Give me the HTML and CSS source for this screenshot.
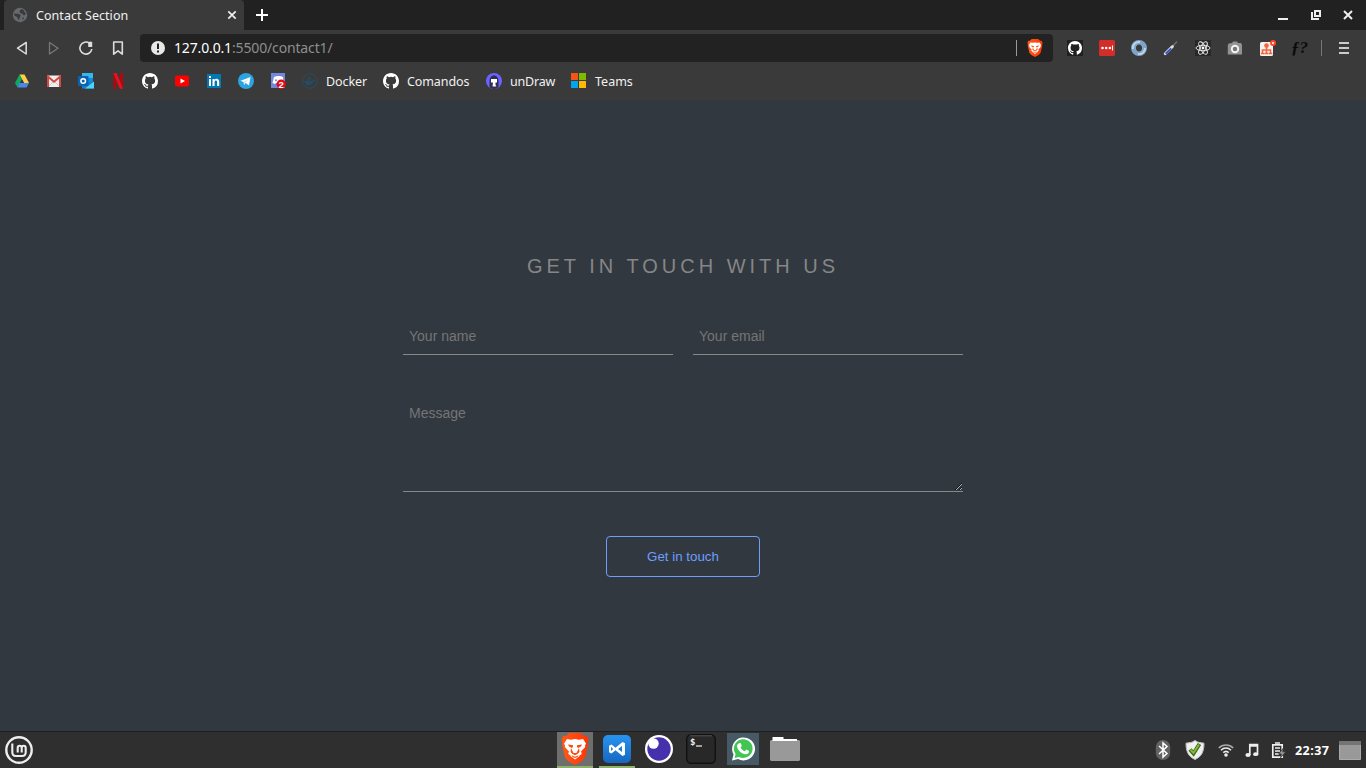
FILE: index.html
```html
<!DOCTYPE html>
<html lang="en">
<head>
<meta charset="utf-8">
<title>Contact Section</title>
<link rel="stylesheet" href="styles.css">
</head>
<body>
<svg class="defs" width="0" height="0" aria-hidden="true">
  <linearGradient id="orange" x2="1" y2="0"><stop stop-color="#ff5a16"/><stop offset="1" stop-color="#ff3505"/></linearGradient>
  <symbol id="github" viewBox="0 0 16 16"><path d="M8 0C3.58 0 0 3.58 0 8c0 3.54 2.29 6.53 5.47 7.59.4.07.55-.17.55-.38 0-.19-.01-.82-.01-1.49-2.01.37-2.53-.49-2.69-.94-.09-.23-.48-.94-.82-1.13-.28-.15-.68-.52-.01-.53.63-.01 1.08.58 1.23.82.72 1.21 1.87.87 2.33.66.07-.52.28-.87.51-1.07-1.78-.2-3.64-.89-3.64-3.95 0-.87.31-1.59.82-2.15-.08-.2-.36-1.02.08-2.12 0 0 .67-.21 2.2.82a7.6 7.6 0 0 1 4 0c1.53-1.04 2.2-.82 2.2-.82.44 1.1.16 1.92.08 2.12.51.56.82 1.27.82 2.15 0 3.07-1.87 3.75-3.65 3.95.29.25.54.73.54 1.48 0 1.07-.01 1.93-.01 2.2 0 .21.15.46.55.38A8.01 8.01 0 0 0 16 8c0-4.42-3.58-8-8-8z"/></symbol>
  <symbol id="brave" viewBox="0 0 28 32"><path fill="url(#orange)" d="M8 0h12l3 3h3l1.500 4-1 3 .5 1.500-3 13-3 3.500-7 4-7-4-3-3.500-3-13 .5-1.500-1-3L2 3h3z"/><path fill="#fff" d="M6 6l4 .8 4-.8 4 .8 4-.8 3 4.500-1 2 .2 1.500-4.200 4.500.8 2.500-2 1.200-.8 1.300-4 3-4-3-.8-1.300-2-1.200.8-2.500L3.800 14l.2-1.500-1-2z"/><path fill="#ff4a0c" d="M7 11.500l5 .8v1.400l-1 1.300-3-1.500zM21 11.500l-5 .8v1.400l1 1.300 3-1.500zM10 15l2.500 5h3l2.500-5 .5 4-2 2-2.500 1.200L11.500 21l-2-2zM10.500 22.200l3.500 1.600 3.500-1.600-1 1.800-2.500 1-2.500-1z"/></symbol>
</svg>

<header class="browser">
  <div class="tabs">
    <div class="tab">
      <svg width="16" height="16" viewBox="0 0 16 16"><circle cx="8" cy="8" r="7.200" fill="#66696d"/><path d="M2 7c2-1 3 0 5 0 2 1 2 2 1 3l-1 3c-2-1-1-3-3-3.500C3 9 2 8 2 7zM8 3c2-1 3-1 4 1l2 3-2 1.500c-1 0-1-2-2.500-2S7 5 8 3zM10 11l2-1-1 3z" fill="#3a3a3a"/></svg>
      <span class="tab-title">Contact Section</span>
      <svg width="10" height="10" viewBox="0 0 10 10"><path d="M1.300 1.300l7.400 7.400m0-7.400L1.300 8.700" stroke="#eee" stroke-width="1.700"/></svg>
    </div>
    <svg class="new-tab" width="12" height="12" viewBox="0 0 12 12"><path d="M6 0v12M0 6h12" stroke="#fff" stroke-width="2"/></svg>
    <div class="window-buttons">
      <svg width="10" height="12" viewBox="0 0 10 12"><path d="M0 10h10" stroke="#eee" stroke-width="2"/></svg>
      <svg width="10" height="12" viewBox="0 0 10 12"><path d="M1 3v7h7M4 2h5v5H4z" fill="none" stroke="#eee" stroke-width="2"/></svg>
      <svg width="10" height="12" viewBox="0 0 10 12"><path d="M1 2l8 8m0-8l-8 8" stroke="#eee" stroke-width="2"/></svg>
    </div>
  </div>

  <div class="toolbar">
    <div class="nav">
      <svg viewBox="0 0 16 16" width="16" height="16"><path d="M12.200 2.500v11.500L3.500 8.200z" fill="none" stroke="#ddd" stroke-width="1.500" stroke-linejoin="round"/></svg>
      <svg viewBox="0 0 16 16" width="16" height="16"><path d="M3.500 2.500v11.500L12 8.200z" fill="none" stroke="#777" stroke-width="1.300" stroke-linejoin="round"/></svg>
      <svg viewBox="0 0 16 16" width="16" height="16"><path d="M13.800 9A6 6 0 1 1 11.500 3.300" fill="none" stroke="#ddd" stroke-width="1.600"/><path d="M10.200 2l3-.5 1 1v4.500h-4z" fill="#ddd"/></svg>
      <svg viewBox="0 0 16 16" width="16" height="16"><path d="M3.700 2h8.600v12.200L8 10.800l-4.300 3.400z" fill="none" stroke="#ddd" stroke-width="1.600" stroke-linejoin="round"/></svg>
    </div>
    <div class="address">
      <svg width="14" height="14" viewBox="0 0 14 14"><circle cx="7" cy="7" r="7" fill="#e8e8e8"/><path d="M7 2.500v5.500M7 9.500v2" stroke="#222" stroke-width="2"/></svg>
      <span class="url"><b>127.0.0.1</b>:5500/contact1/</span>
      <i class="divider"></i>
      <svg width="16" height="18"><use href="#brave"/></svg>
    </div>
    <div class="extensions">
      <svg width="16" height="16" viewBox="0 0 16 16"><path fill="#211f1f" d="M0 0h16v16H0z"/><use href="#github" x="1" y="1" width="14" height="14" fill="#fff"/></svg>
      <svg width="16" height="16" viewBox="0 0 16 16"><rect width="16" height="16" rx="1.500" fill="#d32d27"/><circle cx="3.500" cy="8" r="1.300" fill="#fff"/><circle cx="7.200" cy="8" r="1.300" fill="#fff"/><circle cx="10.900" cy="8" r="1.300" fill="#fff"/><path d="M13.500 5.500v5" stroke="#fff"/></svg>
      <svg width="16" height="16" viewBox="0 0 16 16"><circle cx="8" cy="8" r="5.500" fill="none" stroke="#7fa4c9" stroke-width="5"/><path d="M2 9A6 6 0 0 1 9 2M14 8a6 6 0 0 1-7 6" fill="none" stroke="#bed3e8" stroke-width="2"/><ellipse cx="8" cy="8" rx="2.500" ry="3.500" fill="#3a3a3a"/></svg>
      <svg width="16" height="16" viewBox="0 0 16 16"><path d="M9 7l5-5.500" stroke="#6a6a6a" stroke-width="1.700"/><path d="M2.200 13.800l7.300-7.300" stroke="#ddd" stroke-width="2.800" stroke-linecap="round"/><path d="M2.700 13.800L8.200 8.400" stroke="#3656c9" stroke-width="2"/></svg>
      <svg width="16" height="16" viewBox="0 0 16 16"><path fill="#282828" d="M0 0h16v16H0z"/><g fill="none" stroke="#f2f2f2" stroke-width=".9"><ellipse cx="8" cy="8" rx="7" ry="2.700"/><ellipse cx="8" cy="8" rx="7" ry="2.700" transform="rotate(60 8 8)"/><ellipse cx="8" cy="8" rx="7" ry="2.700" transform="rotate(120 8 8)"/></g><circle cx="8" cy="8" r="1.400" fill="#fff"/></svg>
      <svg width="16" height="16" viewBox="0 0 16 16"><path d="M5 3l1-1.500h4L11 3h3l1 2v9.500H.8V5l1-1.500z" fill="#929292"/><circle cx="8" cy="9" r="3.200" fill="#777" stroke="#f4f4f4" stroke-width="1.900"/></svg>
      <svg width="17" height="16" viewBox="0 0 17 16"><rect x="1" y="2" width="13" height="14" rx="1.500" fill="#f5f1ef"/><circle cx="7.500" cy="5.500" r="2.300" fill="#f2653f"/><path d="M7.500 7v7M3.500 13v-3h8v3M1.800 13.500h3.600M5.700 13.500h3.600M9.700 13.500h3.600" fill="none" stroke="#f2653f" stroke-width="1.600"/><circle cx="14" cy="3" r="3" fill="#ff4827"/><circle cx="14" cy="3" r="1" fill="#fff"/></svg>
      <span class="font-query">ƒ?</span>
      <i class="divider"></i>
      <svg class="menu" width="10" height="12" viewBox="0 0 10 12"><path d="M0 1h10M0 6h10M0 11h10" stroke="#ccc" stroke-width="1.800"/></svg>
    </div>
  </div>

  <nav class="bookmarks">
    <a><svg width="16" height="16" viewBox="0 0 16 16"><path d="M5.500 1.500h5L15 10h-5z" fill="#ffcf40"/><path d="M5.500 1.500L8 6.300 3.500 14.500 1 10z" fill="#11a861"/><path d="M5.500 10H15l-2.500 4.500h-9z" fill="#4787f4"/><path d="M8 6.300l2 3.700H6z" fill="#3a3a3a"/></svg></a>
    <a><svg width="16" height="16" viewBox="0 0 16 16"><path d="M1 2.500h14V14H1z" fill="#eee"/><path d="M3 13l5-5 5 5" stroke="#ccc" fill="none"/><path d="M2 14V3.700l6 5 6-5V14" fill="none" stroke="#d54a3f" stroke-width="2"/></svg></a>
    <a><svg width="16" height="16" viewBox="0 0 16 16"><path d="M4 0h11v11H4z" fill="#35b8f1"/><path d="M10 5h5v5h-5z" fill="#1688d9"/><path d="M4 9h12v6.500H4z" fill="#1680cb"/><path d="M16 8.500v7H7z" fill="#4fd3fa"/><rect y="3" width="10.500" height="10" rx=".8" fill="#0864b1"/><circle cx="5.200" cy="8" r="2.300" fill="none" stroke="#fff" stroke-width="1.500"/></svg></a>
    <a><svg width="16" height="16" viewBox="0 0 16 16"><path d="M3.500 0h3v15.500l-3 .5zM10 0h3v16l-3-.5z" fill="#b20710"/><path d="M3.500 0h3L13 16l-3.200-.5z" fill="#f0101a"/></svg></a>
    <a><svg width="16" height="16" fill="#fff"><use href="#github"/></svg></a>
    <a><svg width="16" height="16" viewBox="0 0 16 16"><rect x="1" y="2.500" width="14" height="11" rx="2" fill="#f00"/><path d="M6.500 5.500v5L11 8z" fill="#fff"/></svg></a>
    <a><svg width="16" height="16" viewBox="0 0 16 16"><path fill="#0377b5" d="M1 1h14v14H1z"/><path d="M3 6h2v7H3zM3 3h2v2H3zM6.500 6h2v1c1-1.800 4.700-1.600 4.700 1.700V13h-2.100V9c0-2-2.500-2-2.500 0v4H6.500z" fill="#fff"/></svg></a>
    <a><svg width="16" height="16" viewBox="0 0 16 16"><circle cx="8" cy="8" r="8" fill="#2ba4df"/><path d="M2.500 7.700L12.500 4 11 12.500 7.700 10 6 12l-.5-3z" fill="#fff"/><path d="M6 9l5-3.500L7.500 9.300 6.500 12z" fill="#bfdded"/></svg></a>
    <a><svg width="16" height="16" viewBox="0 0 16 16"><path fill="#7289da" d="M1 0h14v15H1z"/><path d="M4 4l3-1h3l3 1 .5 6-2.500 1-1-1H6l-1 1-2.500-1z" fill="#fff"/><circle cx="6" cy="7.300" r="1" fill="#7289da"/><circle cx="11.200" cy="11.200" r="4.700" fill="#e50914"/><text x="8.600" y="14.600" font-family="Liberation Sans" font-size="9.500" font-weight="700" fill="#fff">2</text></svg></a>
    <a class="docker"><svg width="16" height="16" viewBox="0 0 16 16"><circle cx="8" cy="8" r="7.300" fill="none" stroke="#294c60"/><path d="M2.500 8h8l1-2 1 1.500h1.500c-1 1.500-2 1.500-3 1.500-2 5-8 4-8.500-1zM4 6.500h5v1H4zM6 4.500h3v1.500H6z" fill="#234c65"/></svg><span>Docker</span></a>
    <a class="comandos"><svg width="16" height="16" fill="#fff"><use href="#github"/></svg><span>Comandos</span></a>
    <a class="undraw"><svg width="16" height="16" viewBox="0 0 16 16"><circle cx="8" cy="8" r="8" fill="#6c63ff"/><path d="M3.500 14V8c0-7.500 9-7.500 9 0v6c-2 2.500-7 2.500-9 0z" fill="#2f2e50"/><path d="M5 6h6v3.500H9.500V12l1 1.500h-4L7 9.500H5z" fill="#fff"/></svg><span>unDraw</span></a>
    <a class="teams"><svg width="16" height="16" viewBox="0 0 16 16"><path fill="#f65314" d="M0 0h7v7H0z"/><path fill="#7fba00" d="M8 0h7v7H8z"/><path fill="#00a4ef" d="M0 8h7v7H0z"/><path fill="#ffb900" d="M8 8h7v7H8z"/></svg><span>Teams</span></a>
  </nav>
</header>

<main class="page">
  <form class="contact">
    <h1>GET IN TOUCH WITH US</h1>
    <div class="fields">
      <input type="text" placeholder="Your name">
      <input type="email" placeholder="Your email">
    </div>
    <textarea placeholder="Message"></textarea>
    <button type="button">Get in touch</button>
  </form>
</main>

<footer class="taskbar">
  <svg class="mint" width="28" height="28" viewBox="0 0 28 28"><g fill="none" stroke="#eee"><circle cx="14" cy="14" r="12.700" stroke-width="2.400"/><path d="M7.300 7.500v8.800c0 2.500 1 3.700 3.500 3.700h6.400c2.500 0 3.500-1.200 3.500-3.700V12c0-3-4-3-4 0v4.500M16.700 12c0-3-4-3-4 0v4.500" stroke-width="2.100"/></g></svg>
  <div class="apps">
    <div class="app focused running"><svg width="28" height="32"><use href="#brave"/></svg></div>
    <div class="app running"><svg width="28" height="28" viewBox="0 0 28 28"><defs><linearGradient id="vs" x2="0" y2="1"><stop stop-color="#2794ef"/><stop offset="1" stop-color="#1767bf"/></linearGradient></defs><rect width="28" height="28" rx="5" fill="url(#vs)"/><path d="M19.500 7l2.500 1.200v11.600L19.500 21l-7-5.700L8.500 18.500 6 17.200v-6.400l2.500-1.300 4 3.200zM19 11l-4 3 4 3zM8 12v4l2.200-2z" fill="#fff" fill-rule="evenodd"/></svg></div>
    <div class="app"><svg width="28" height="28" viewBox="0 0 28 28"><circle cx="14" cy="14" r="14" fill="#fff"/><circle cx="14" cy="14" r="11.700" fill="#4630ab"/><circle cx="8.500" cy="8.500" r="5.200" fill="#fff"/></svg></div>
    <div class="app"><svg width="30" height="30" viewBox="0 0 30 30"><rect x=".7" y=".7" width="28.600" height="28.600" rx="4.500" fill="#282828" stroke="#111" stroke-width="1.400"/><path d="M4 1.800h22" stroke="#555"/><text x="4" y="10.500" font-family="DejaVu Sans Mono" font-size="9" font-weight="700" fill="#eee">$</text><path d="M10 12h6" stroke="#eee" stroke-width="1.200"/></svg></div>
    <div class="app"><svg width="32" height="32" viewBox="0 0 32 32"><path fill="#455a64" d="M0 0h32v32H0z"/><path d="M5 27.500l1.500-6A11.500 11.500 0 1 1 11 26z" fill="#fff"/><path d="M7.600 24.900l1-3.800A9.400 9.400 0 1 1 12 24z" fill="#43c553"/><path d="M12.200 10.200c.5-.4 1.300-.4 1.600.2l1 2.300-1.200 1.700c1 2 2.200 3 4.200 3.800l1.600-1.700 2.600 1.400c.3 2.400-2 3.600-4 3.300-4-.8-7.800-4.500-8-8 0-1.200.8-2.500 2.200-3z" fill="#fff"/></svg></div>
    <div class="app"><svg width="30" height="26" viewBox="0 0 30 26"><path d="M1 4h28l1 1v19l-1 1H1l-1-1V5z" fill="#999"/><path d="M2.500 1h11v2H27v2H2.500z" fill="#fff"/></svg></div>
  </div>
  <div class="tray">
    <svg width="16" height="20" viewBox="0 0 16 20"><rect x=".8" y="0" width="14.400" height="20" rx="7.200" fill="#626262"/><path d="M4 6l8 7.500L8 17V3l4 3.500L4 14" fill="none" stroke="#fff" stroke-width="1.500"/></svg>
    <svg width="20" height="20" viewBox="0 0 20 20"><path d="M10 .5l3 1.700 6 1C19 11 17 16.500 10 19.500 3 16.500 1 11 1 3.200l6-1z" fill="#f0f0f0" stroke="#bbb"/><path d="M5 9.500l3.500 4L14.500 4" fill="none" stroke="#3c6c12" stroke-width="4"/><path d="M5.500 9.800l3 3.200L14 4.500" fill="none" stroke="#82b83c" stroke-width="2"/></svg>
    <svg width="16" height="14" viewBox="0 0 16 14"><g fill="none" stroke-width="1.600"><path d="M.8 5c4-4 10.400-4 14.400 0" stroke="#aaa"/><path d="M3 7.300c3-3 7-3 10 0M5.300 9.700c1.700-1.600 3.700-1.600 5.400 0" stroke="#eee"/></g><circle cx="8" cy="12" r="1.800" fill="#eee"/></svg>
    <svg width="14" height="14" viewBox="0 0 14 14"><path d="M4.800 12V1.500h7.700V11M5 3h7" fill="none" stroke="#eee" stroke-width="1.700"/><ellipse cx="3" cy="12" rx="2.600" ry="1.900" fill="#eee"/><ellipse cx="10.700" cy="11.200" rx="2.600" ry="1.900" fill="#eee"/></svg>
    <svg width="16" height="16" viewBox="0 0 16 16"><path d="M5 1h5M2.800 2.800h9.400v12.400H2.800zM5 6h5M5 9h5M5 12h4" fill="none" stroke="#eee" stroke-width="1.700"/><path d="M13 6.500L8.500 12h3l-1 3.800 5.300-6h-3.300z" fill="#999" stroke="#2f2f2f" stroke-width=".7"/></svg>
    <span class="clock">22:37</span>
    <svg width="22" height="19" viewBox="0 0 22 19"><path d="M.5.5h21v18H.5z" fill="#999" stroke="#aaa"/><path d="M0 0h22v4H0z" fill="#747474"/></svg>
  </div>
</footer>
</body>
</html>
```
FILE: styles.css
```css
* { box-sizing: border-box; }
body {
  margin: 0;
  height: 768px;
  display: flex;
  flex-direction: column;
  overflow: hidden;
  background: #323840;
  font-family: "Noto Sans", sans-serif;
}
svg { display: block; flex: none; }
.defs { position: absolute; }

.browser { height: 100px; background: #3a3a3a; color: #f1f1f1; font-size: 12.500px; }
.tabs { height: 30px; display: flex; align-items: center; padding-left: 4px; background: #212121; }
.tab {
  width: 240px; height: 30px; padding: 0 7px 0 8px;
  display: flex; align-items: center; gap: 8px;
  background: #3a3a3a; border-radius: 4px 4px 0 0;
}
.tab-title { flex: 1; letter-spacing: .06px; }
.new-tab { margin-left: 12px; }
.window-buttons { display: flex; gap: 22px; margin-left: auto; padding-right: 13px; }
.window-buttons svg:first-child { margin-right: 1px; }

.toolbar { height: 36px; display: flex; align-items: center; padding-left: 14px; }
.nav { width: 126px; display: flex; gap: 16px; }
.address {
  width: 913px; height: 28px; padding: 0 10px 0 11px;
  display: flex; align-items: center;
  background: #222; border-radius: 4px;
}
.url { flex: 1; margin-left: 9px; padding-bottom: 2px; font-size: 14px; color: #8e8e8e; letter-spacing: -.15px; }
.url b { font-weight: 400; color: #fff; }
.divider { width: 1px; height: 16px; background: #999; }
.address .divider { margin-right: 10px; }
.extensions { display: flex; align-items: center; gap: 16px; margin-left: 14px; }
.extensions svg:nth-child(7) { margin-right: -1px; }
.font-query { width: 16px; font: italic 700 17px/20px "Liberation Serif", serif; color: #0b0b0b; white-space: nowrap; }
.extensions .divider { background: #777; margin-left: -2px; }
.menu { margin-left: 1px; }

.bookmarks { display: flex; padding: 7px 0 0 6px; }
.bookmarks a { height: 16px; padding: 0 8px; display: flex; align-items: center; gap: 8px; }
.bookmarks span { white-space: nowrap; }
.docker span { width: 41px; letter-spacing: -.1px; }
.comandos span { width: 63px; letter-spacing: -.1px; }
.undraw span { width: 45px; letter-spacing: -.2px; }

.page { height: 631px; display: flex; justify-content: center; font-family: "Liberation Sans", Arial, sans-serif; }
.contact { width: 560px; padding-top: 154px; display: flex; flex-direction: column; align-items: center; }
.contact h1 { margin: 0; font-size: 20px; line-height: 24px; font-weight: 400; letter-spacing: 4px; color: #868686; }
.fields { width: 100%; margin-top: 40px; display: grid; grid-template-columns: 1fr 1fr; gap: 20px; }
.contact input, .contact textarea {
  width: 100%; border: 0; border-bottom: 1px solid #888; outline: 0; border-radius: 0;
  background: transparent; color: #ddd; font: 14px "Liberation Sans", Arial, sans-serif;
}
.contact input { height: 37px; padding: 0 6px; }
.contact textarea { height: 97px; margin-top: 40px; padding: 10px 6px; }
.contact ::placeholder { color: #757575; }
.contact button {
  width: 154px; height: 41px; margin-top: 44px; padding: 0;
  border: 1px solid #6c9eff; border-radius: 4px; background: transparent;
  color: #6c9eff; font: 13.333px "Liberation Sans", Arial, sans-serif;
}

.taskbar { height: 37px; display: flex; align-items: center; background: #2f2f2f; border-top: 1px solid #1d1f21; }
.mint { margin-left: 5px; }
.apps { display: flex; gap: 6px; margin-left: 524px; }
.app { width: 36px; height: 36px; display: flex; align-items: center; justify-content: center; border-bottom: 2px solid transparent; }
.focused { background: #6e6e6e; }
.running { border-color: #8eb16b; }
.tray { display: flex; align-items: center; margin-left: auto; padding-right: 5px; }
.tray svg:nth-child(2) { margin-left: 14px; }
.tray svg:nth-child(3) { margin-left: 13px; }
.tray svg:nth-child(4) { margin-left: 11px; }
.tray svg:nth-child(5) { margin-left: 11px; }
.clock { width: 44px; margin-left: 9px; padding-top: 1px; font-size: 12.500px; font-weight: 700; letter-spacing: .45px; color: #fff; }
```
